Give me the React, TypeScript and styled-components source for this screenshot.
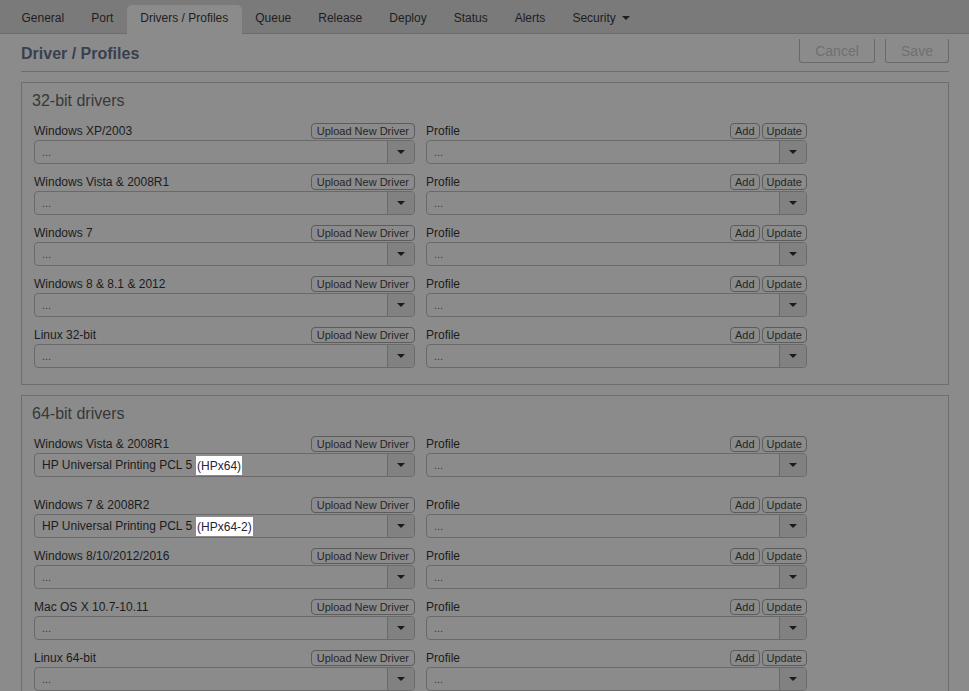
import React, { FC } from 'react'
import styled, { createGlobalStyle } from 'styled-components'

const GlobalStyle = createGlobalStyle`
  body {
    margin: 0;
    background: #8b8b8b;
    font-family: 'Liberation Sans', Arial, sans-serif;
    color: #1c1c1c;
  }
`

const NavBar = styled.nav`
  display: flex;
  align-items: flex-end;
  height: 33px;
  padding-left: 8px;
  background: #7a7a7a;
  border-bottom: 1px solid #6c6c6c;
`

const Tab = styled.div<{ $active?: boolean }>`
  display: flex;
  align-items: center;
  gap: 6px;
  height: 29px;
  padding: 0 13.5px 3px 13.5px;
  box-sizing: border-box;
  margin-bottom: -1px;
  font-size: 12px;
  color: #1e1e1e;
  border-radius: 5px 5px 0 0;
  background: ${p => (p.$active ? '#8b8b8b' : 'transparent')};
`

const Caret = styled.span`
  width: 0;
  height: 0;
  border-left: 4px solid transparent;
  border-right: 4px solid transparent;
  border-top: 4px solid #1e1e1e;
`

const Main = styled.main`
  padding: 0 20px 0 21px;
`

const Header = styled.header`
  display: flex;
  justify-content: space-between;
  align-items: flex-end;
  height: 37px;
  border-bottom: 1px solid #6e6e6e;
`

const Title = styled.h1`
  margin: 0 0 8px 0;
  font-size: 16px;
  font-weight: bold;
  color: #39404e;
`

const HeaderActions = styled.div`
  display: flex;
  gap: 10px;
  margin-bottom: 8px;
`

const HeaderButton = styled.button<{ $w: number }>`
  width: ${p => p.$w}px;
  height: 24px;
  font-family: inherit;
  font-size: 14px;
  color: #707070;
  background: #8b8b8b;
  border: 1px solid #6a6a6a;
  border-top: none;
  border-radius: 0 0 3px 3px;
  padding: 0;
`

const Section = styled.section`
  margin-top: 10px;
  border: 1px solid #6e6e6e;
  padding: 8px 12px 16px 12px;
`

const SectionTitle = styled.h2`
  margin: 0 0 12px -2px;
  font-size: 16px;
  line-height: 20px;
  font-weight: normal;
  color: #383838;
`

const Row = styled.div<{ $extra?: boolean }>`
  display: grid;
  grid-template-columns: 381px 381px;
  column-gap: 11px;
  margin-bottom: ${p => (p.$extra ? 20 : 10)}px;

  &:last-child {
    margin-bottom: 0;
  }
`

const Field = styled.div`
  display: flex;
  flex-direction: column;
  gap: 1px;
`

const FieldHead = styled.div`
  display: flex;
  align-items: center;
  justify-content: space-between;
  height: 16px;
`

const Label = styled.span`
  font-size: 12px;
  color: #1c1c1c;
`

const Buttons = styled.div`
  display: flex;
  gap: 2px;
`

const SmallButton = styled.button<{ $pad?: number }>`
  height: 16px;
  padding: 0 ${p => p.$pad ?? 5}px;
  font-family: inherit;
  font-size: 11px;
  line-height: 14px;
  color: #262626;
  background: #8b8b8b;
  border: 1px solid #5c5c5c;
  border-radius: 4px;
`

const Select = styled.div`
  display: flex;
  height: 24px;
  border: 1px solid #6a6a6a;
  border-radius: 4px;
  box-sizing: border-box;
  overflow: hidden;
`

const SelectValue = styled.div<{ $empty?: boolean }>`
  flex: 1;
  display: flex;
  align-items: center;
  padding-left: 7px;
  font-size: ${p => (p.$empty ? 11 : 12)}px;
  color: ${p => (p.$empty ? '#3a3a3a' : '#1c1c1c')};
`

const Highlight = styled.span`
  background: #ffffff;
  color: #24243c;
  padding: 3px 1px 2px 1px;
  margin-left: 4px;
`

const SelectArrow = styled.div`
  width: 26px;
  display: flex;
  align-items: center;
  justify-content: center;
  background: #818181;
  border-left: 1px solid #6a6a6a;

  &::after {
    content: '';
    border-left: 4px solid transparent;
    border-right: 4px solid transparent;
    border-top: 4px solid #1a1a1a;
  }
`

interface DriverRow {
  os: string
  value?: string
  tag?: string
  extra?: boolean
}

const drivers32: DriverRow[] = [
  { os: 'Windows XP/2003' },
  { os: 'Windows Vista & 2008R1' },
  { os: 'Windows 7' },
  { os: 'Windows 8 & 8.1 & 2012' },
  { os: 'Linux 32-bit' },
]

const drivers64: DriverRow[] = [
  { os: 'Windows Vista & 2008R1', value: 'HP Universal Printing PCL 5', tag: '(HPx64)', extra: true },
  { os: 'Windows 7 & 2008R2', value: 'HP Universal Printing PCL 5', tag: '(HPx64-2)' },
  { os: 'Windows 8/10/2012/2016' },
  { os: 'Mac OS X 10.7-10.11' },
  { os: 'Linux 64-bit' },
]

const Dropdown: FC<{ value?: string; tag?: string }> = ({ value, tag }) => (
  <Select>
    {value ? (
      <SelectValue>
        {value}
        {tag && <Highlight>{tag}</Highlight>}
      </SelectValue>
    ) : (
      <SelectValue $empty>...</SelectValue>
    )}
    <SelectArrow />
  </Select>
)

const DriverSection: FC<{ title: string; rows: DriverRow[] }> = ({ title, rows }) => (
  <Section>
    <SectionTitle>{title}</SectionTitle>
    {rows.map(row => (
      <Row key={row.os} $extra={row.extra}>
        <Field>
          <FieldHead>
            <Label>{row.os}</Label>
            <SmallButton>Upload New Driver</SmallButton>
          </FieldHead>
          <Dropdown value={row.value} tag={row.tag} />
        </Field>
        <Field>
          <FieldHead>
            <Label>Profile</Label>
            <Buttons>
              <SmallButton $pad={4}>Add</SmallButton>
              <SmallButton $pad={4}>Update</SmallButton>
            </Buttons>
          </FieldHead>
          <Dropdown />
        </Field>
      </Row>
    ))}
  </Section>
)

const tabs = ['General', 'Port', 'Drivers / Profiles', 'Queue', 'Release', 'Deploy', 'Status', 'Alerts']

export default function App() {
  return (
    <>
      <GlobalStyle />
      <NavBar>
        {tabs.map(t => (
          <Tab key={t} $active={t === 'Drivers / Profiles'}>
            {t}
          </Tab>
        ))}
        <Tab>
          Security
          <Caret />
        </Tab>
      </NavBar>
      <Main>
        <Header>
          <Title>Driver / Profiles</Title>
          <HeaderActions>
            <HeaderButton $w={76}>Cancel</HeaderButton>
            <HeaderButton $w={64}>Save</HeaderButton>
          </HeaderActions>
        </Header>
        <DriverSection title="32-bit drivers" rows={drivers32} />
        <DriverSection title="64-bit drivers" rows={drivers64} />
      </Main>
    </>
  )
}
